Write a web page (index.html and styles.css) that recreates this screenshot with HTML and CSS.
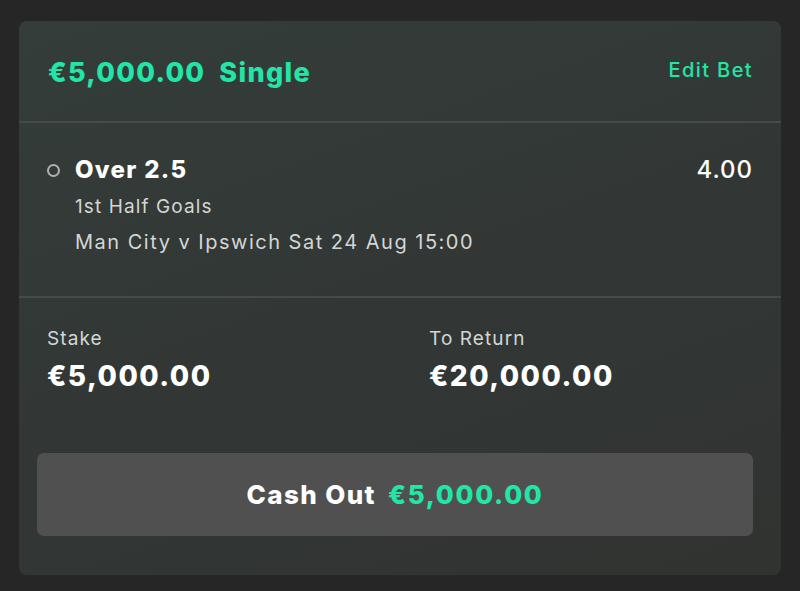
FILE: index.html
```html
<!DOCTYPE html>
<html>
<head>
<meta charset="utf-8">
<link rel="stylesheet" href="styles.css">
</head>
<body>
<div class="card">
  <div class="head">
    <div class="title"><span>€5,000.00</span><span>Single</span></div>
    <div class="edit">Edit Bet</div>
  </div>
  <div class="sel">
    <div class="dot"></div>
    <div class="info">
      <div class="name">Over 2.5</div>
      <div class="market">1st Half Goals</div>
      <div class="event">Man City v Ipswich Sat 24 Aug 15:00</div>
    </div>
    <div class="odds">4.00</div>
  </div>
  <div class="foot">
    <div class="amounts">
      <div class="col">
        <div class="lbl">Stake</div>
        <div class="val">€5,000.00</div>
      </div>
      <div class="col">
        <div class="lbl">To Return</div>
        <div class="val">€20,000.00</div>
      </div>
    </div>
    <div class="cash"><span class="co">Cash Out</span><span class="amt">€5,000.00</span></div>
  </div>
</div>
</body>
</html>
```
FILE: styles.css
```css
html, body { margin: 0; padding: 0; }
body {
  background: #262626;
  width: 800px;
  height: 591px;
  font-family: Inter, "Noto Sans", sans-serif;
  color: #fff;
  overflow: hidden;
}
.card {
  margin: 21px 0 0 19px;
  width: 762px;
  height: 554px;
  border-radius: 8px;
  background: linear-gradient(160deg, #343d3a 0%, #323735 50%, #313331 100%);
  display: flex;
  flex-direction: column;
}
.head {
  height: 100px;
  border-bottom: 2px solid #454b49;
  display: flex;
  align-items: center;
  justify-content: space-between;
  padding: 0 28px 0 29px;
}
.title {
  display: flex;
  gap: 14px;
  color: #22e6a8;
  font-weight: 800;
  font-size: 27px;
  letter-spacing: 1.3px;
  margin-top: 2px;
}
.edit {
  color: #22e6a8;
  font-size: 20px;
  font-weight: 500;
  letter-spacing: 1.4px;
  margin-top: -2px;
}
.sel {
  border-bottom: 2px solid #454b49;
  display: flex;
  padding: 0 28px 0 28px;
  box-sizing: border-box;
  height: 175px;
}
.dot {
  width: 9px;
  height: 9px;
  border: 2px solid #b0b2b1;
  border-radius: 50%;
  margin: 41px 15px 0 0;
  flex: none;
}
.info { flex: 1; padding-top: 33px; }
.name { font-size: 24px; font-weight: 800; line-height: 28px; letter-spacing: 1.3px; }
.market { font-size: 19px; color: #d4d6d5; margin-top: 11px; line-height: 24px; letter-spacing: 1.1px; }
.event { font-size: 20px; color: #d4d6d5; margin-top: 11px; line-height: 24px; letter-spacing: 1.5px; }
.odds { font-size: 24px; padding-top: 33px; line-height: 28px; font-weight: 500; letter-spacing: 1px; }
.foot {
  flex: 1;
  padding: 29px 28px 39px 18px;
  display: flex;
  flex-direction: column;
}
.amounts { display: flex; padding-left: 10px; }
.col { width: 382px; flex: none; }
.lbl { font-size: 19px; color: #d4d6d5; line-height: 24px; letter-spacing: 1.1px; }
.val { font-size: 28px; font-weight: 800; line-height: 34px; margin-top: 8px; letter-spacing: 1.5px; }
.cash {
  margin-top: auto;
  height: 83px;
  background: #505050;
  border-radius: 7px;
  display: flex;
  align-items: center;
  justify-content: center;
  gap: 12px;
  font-size: 26px;
  font-weight: 800;
}
.co { letter-spacing: 1.4px; }
.amt { color: #22e6a8; letter-spacing: 1.7px; }
```
